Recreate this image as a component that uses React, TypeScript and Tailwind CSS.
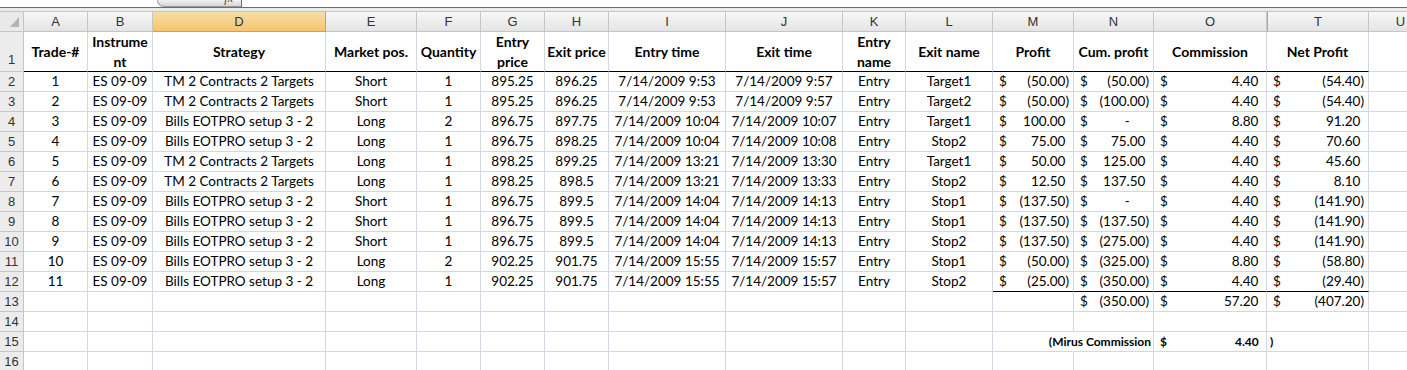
import type { ReactNode } from "react";

type Row = string[];

const letters = ["A", "B", "D", "E", "F", "G", "H", "I", "J", "K", "L", "M", "N", "O", "T", "U"];

const widths =
  "grid-cols-[24px_64px_65px_173px_91px_64px_64px_64px_117px_117px_63px_87px_81px_80px_113px_102px_64px]";

// A..L text, then Profit, Cum. profit, Commission, Net Profit
const trades: Row[] = [
  ["1", "ES 09-09", "TM 2 Contracts 2 Targets", "Short", "1", "895.25", "896.25", "7/14/2009 9:53", "7/14/2009 9:57", "Entry", "Target1", "(50.00)", "(50.00)", "4.40", "(54.40)"],
  ["2", "ES 09-09", "TM 2 Contracts 2 Targets", "Short", "1", "895.25", "896.25", "7/14/2009 9:53", "7/14/2009 9:57", "Entry", "Target2", "(50.00)", "(100.00)", "4.40", "(54.40)"],
  ["3", "ES 09-09", "Bills EOTPRO setup 3 - 2", "Long", "2", "896.75", "897.75", "7/14/2009 10:04", "7/14/2009 10:07", "Entry", "Target1", "100.00", "-", "8.80", "91.20"],
  ["4", "ES 09-09", "Bills EOTPRO setup 3 - 2", "Long", "1", "896.75", "898.25", "7/14/2009 10:04", "7/14/2009 10:08", "Entry", "Stop2", "75.00", "75.00", "4.40", "70.60"],
  ["5", "ES 09-09", "TM 2 Contracts 2 Targets", "Long", "1", "898.25", "899.25", "7/14/2009 13:21", "7/14/2009 13:30", "Entry", "Target1", "50.00", "125.00", "4.40", "45.60"],
  ["6", "ES 09-09", "TM 2 Contracts 2 Targets", "Long", "1", "898.25", "898.5", "7/14/2009 13:21", "7/14/2009 13:33", "Entry", "Stop2", "12.50", "137.50", "4.40", "8.10"],
  ["7", "ES 09-09", "Bills EOTPRO setup 3 - 2", "Short", "1", "896.75", "899.5", "7/14/2009 14:04", "7/14/2009 14:13", "Entry", "Stop1", "(137.50)", "-", "4.40", "(141.90)"],
  ["8", "ES 09-09", "Bills EOTPRO setup 3 - 2", "Short", "1", "896.75", "899.5", "7/14/2009 14:04", "7/14/2009 14:13", "Entry", "Stop1", "(137.50)", "(137.50)", "4.40", "(141.90)"],
  ["9", "ES 09-09", "Bills EOTPRO setup 3 - 2", "Short", "1", "896.75", "899.5", "7/14/2009 14:04", "7/14/2009 14:13", "Entry", "Stop2", "(137.50)", "(275.00)", "4.40", "(141.90)"],
  ["10", "ES 09-09", "Bills EOTPRO setup 3 - 2", "Long", "2", "902.25", "901.75", "7/14/2009 15:55", "7/14/2009 15:57", "Entry", "Stop1", "(50.00)", "(325.00)", "8.80", "(58.80)"],
  ["11", "ES 09-09", "Bills EOTPRO setup 3 - 2", "Long", "1", "902.25", "901.75", "7/14/2009 15:55", "7/14/2009 15:57", "Entry", "Stop2", "(25.00)", "(350.00)", "4.40", "(29.40)"],
];

const grid = "border-r border-b border-[#d0d7e5]";

function Acct({ v, bold }: { v: string; bold?: boolean }) {
  let tail: ReactNode = null;
  if (v === "-") tail = <span className="invisible">00)</span>;
  else if (!v.endsWith(")")) tail = <span className="invisible">)</span>;
  return (
    <div className={`flex justify-between pl-[6px] pr-[4px] w-full ${bold ? "font-bold" : ""}`}>
      <span>$</span>
      <span>
        {v}
        {tail}
      </span>
    </div>
  );
}

function RowHead({ n, tall }: { n: number; tall?: boolean }) {
  return (
    <div
      className={`flex justify-center border-r border-b border-[#c5c5c5] bg-[#ececec] font-['Liberation_Sans'] text-[13px] text-[#333] ${
        tall ? "h-[40px] items-end pb-[2px]" : "h-[20px] items-center"
      }`}
    >
      {n}
    </div>
  );
}

function Cell({
  children,
  className = "",
}: {
  children?: ReactNode;
  className?: string;
}) {
  return (
    <div className={`h-[20px] flex items-center ${grid} ${className}`}>{children}</div>
  );
}

export default function App() {
  return (
    <div className="w-[1407px] h-[370px] overflow-hidden bg-white font-['Lato'] text-[13.5px] text-black">
      {/* formula bar remnant */}
      <div className="h-[7px] overflow-hidden flex">
        <div className="w-[157px] font-['Liberation_Sans'] text-[13px] leading-[13px] -mt-[11px] pl-[57px] text-[#222]">
          D20
        </div>
        <div className="w-[84px] h-[7px] rounded-bl-[9px] border-b border-l border-[#9a9a9a] bg-gradient-to-b from-[#f2f2f2] to-[#d6d6d6] flex justify-end pr-[8px]">
          <span className="italic font-['Liberation_Serif'] text-[12px] leading-[12px] -mt-[8px] text-[#444]">fx</span>
        </div>
        <div className="flex-1 border-l border-[#6e6e6e]" />
      </div>
      <div className="h-px bg-[#6e6e6e]" />
      <div className="h-[3px] bg-[#ebebeb]" />

      <div className={`grid w-max ${widths}`}>
        {/* column letters */}
        <div className="h-[21px] border-t border-r border-b border-[#c5c5c5] bg-[#e9e9e9] relative">
          <svg className="absolute left-[10px] top-[5px]" width="9" height="10" viewBox="0 0 9 10">
            <polygon points="9,0 9,10 0,10" fill="#b4b4b4" />
          </svg>
        </div>
        {letters.map((l) => (
          <div
            key={l}
            className={`h-[21px] flex items-center justify-center font-['Liberation_Sans'] text-[13px] text-[#333] border-t border-r border-b ${
              l === "D"
                ? "bg-gradient-to-b from-[#f9dca6] to-[#f4c56d] border-[#f29536] border-t-[#c5c5c5]"
                : "bg-gradient-to-b from-[#f7f7f7] to-[#e4e4e4] border-[#c5c5c5]"
            } ${l === "T" ? "border-l border-l-[#a8a8a8]" : ""}`}
          >
            {l}
          </div>
        ))}

        {/* row 1 headers */}
        <RowHead n={1} tall />
        {[
          "Trade-#",
          "Instrume\nnt",
          "Strategy",
          "Market pos.",
          "Quantity",
          "Entry\nprice",
          "Exit price",
          "Entry time",
          "Exit time",
          "Entry\nname",
          "Exit name",
          "Profit",
          "Cum. profit",
          "Commission",
          "Net Profit",
        ].map((h) => (
          <div
            key={h}
            className="h-[40px] flex items-center justify-center text-center whitespace-pre-line font-bold text-[14px] leading-[20px] border-r border-r-[#d0d7e5] border-b border-b-black"
          >
            {h}
          </div>
        ))}
        <div className={`h-[40px] ${grid}`} />

        {/* trades */}
        {trades.map((r, i) => {
          const last = i === trades.length - 1;
          const under = last ? "border-b-black" : "";
          return [
            <RowHead key={`h${i}`} n={i + 2} />,
            ...r.slice(0, 11).map((v, j) => (
              <Cell key={`c${i}-${j}`} className="justify-center whitespace-nowrap">
                {v}
              </Cell>
            )),
            ...r.slice(11).map((v, j) => (
              <Cell key={`a${i}-${j}`} className={under}>
                <Acct v={v} />
              </Cell>
            )),
            <Cell key={`u${i}`} />,
          ];
        })}

        {/* row 13 totals */}
        <RowHead n={13} />
        {Array.from({ length: 12 }).map((_, j) => (
          <Cell key={`t${j}`} />
        ))}
        <Cell>
          <Acct v="(350.00)" />
        </Cell>
        <Cell>
          <Acct v="57.20" />
        </Cell>
        <Cell>
          <Acct v="(407.20)" />
        </Cell>
        <Cell />

        {/* row 14 */}
        <RowHead n={14} />
        {Array.from({ length: 16 }).map((_, j) => (
          <Cell key={`e14-${j}`} />
        ))}

        {/* row 15 commission note */}
        <RowHead n={15} />
        {Array.from({ length: 11 }).map((_, j) => (
          <Cell key={`e15-${j}`} />
        ))}
        <Cell className="border-r-transparent" />
        <Cell className="justify-end pr-[2px] whitespace-nowrap font-bold text-[12px]">(Mirus Commission</Cell>
        <Cell className="text-[12px]">
          <Acct v="4.40" bold />
        </Cell>
        <Cell className="pl-[3px] font-bold text-[12px]">)</Cell>
        <Cell />

        {/* row 16 */}
        <RowHead n={16} />
        {Array.from({ length: 16 }).map((_, j) => (
          <Cell key={`e16-${j}`} />
        ))}
      </div>
    </div>
  );
}
